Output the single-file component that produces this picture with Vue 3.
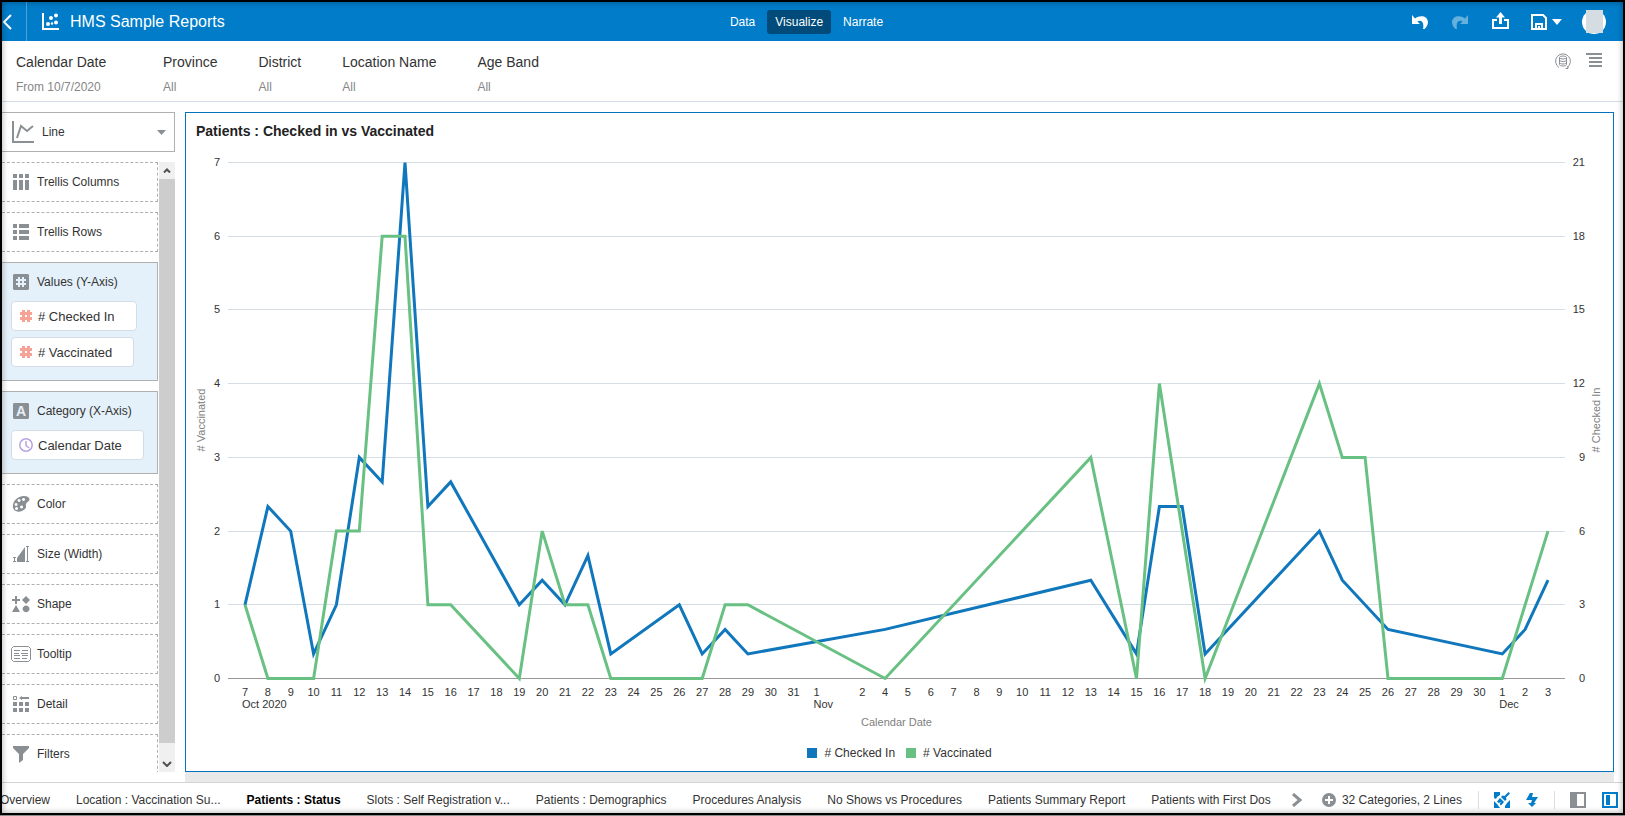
<template>
  <div class="frame">
    <!-- top bar -->
    <header class="topbar">
      <div class="brand">
        <button class="back" aria-label="Back">
          <svg width="10" height="16" viewBox="0 0 10 16"><path d="M9 1L2 8l7 7" fill="none" stroke="#fff" stroke-width="2" /></svg>
        </button>
        <svg class="logo" width="17" height="17" viewBox="0 0 17 17" fill="#fff">
          <path d="M0 0h2v15h15v2H0z" />
          <circle cx="9" cy="5" r="2" />
          <circle cx="14" cy="2.500" r="2" />
          <circle cx="6" cy="11" r="2" />
          <circle cx="14" cy="9.500" r="2" />
          <circle cx="10" cy="10.500" r="1.200" />
        </svg>
        <h1>HMS Sample Reports</h1>
      </div>
      <nav class="modes">
        <button v-for="m in modes" :key="m" :class="{ active: m === mode }" @click="mode = m">{{ m }}</button>
      </nav>
      <div class="actions">
        <button aria-label="Undo">
          <svg width="16" height="16" viewBox="0 0 16 16"><path d="M0 1v9h8L5.400 7.400C9 5.600 12.500 8 11 15h1.500c4-3.500 4.500-8.500 1.500-11.300C11 1.500 6.500 1.800 3 4.500z" fill="#fff" /></svg>
        </button>
        <button aria-label="Redo" disabled>
          <svg width="16" height="16" viewBox="0 0 16 16"><path d="M16 1v9H8l2.600-2.600C7 5.600 3.500 8 5 15H3.500C-.5 11.500-1 6.500 2 3.700 5 1.500 9.500 1.800 13 4.500z" fill="#66b0de" /></svg>
        </button>
        <button class="share" aria-label="Share">
          <svg width="17" height="18" viewBox="0 0 17 18"><path d="M8.500 0l4.500 5.500h-3V12H7V5.500H4zM0 7h5v2H2v6h13V9h-3V7h5v10H0z" fill="#fff" /></svg>
        </button>
        <button class="save" aria-label="Save">
          <svg width="16" height="16" viewBox="0 0 16 16" fill="none" stroke="#fff" stroke-width="2"><path d="M1 1h11l3 3v11H1z" /><path d="M5 15v-5h6v5" /><path d="M8 12v3" /></svg>
          <svg width="10" height="6" viewBox="0 0 10 6"><path d="M0 0h10L5 6z" fill="#fff" /></svg>
        </button>
        <button class="avatar" aria-label="Account"><span></span></button>
      </div>
    </header>

    <!-- filter bar -->
    <section class="filters">
      <button v-for="f in filters" :key="f.name" class="filter">
        <span class="filter-name">{{ f.name }}</span>
        <span class="filter-value">{{ f.value }}</span>
      </button>
      <div class="filter-tools">
        <button aria-label="Data refresh">
          <svg width="16" height="16" viewBox="0 0 16 16" fill="none" stroke="#8a8f94">
            <path d="M4 14.500A7.400 7.400 0 1 1 12 14.500" />
            <path d="M10.500 15.500h2.500v-2.500" />
            <ellipse cx="8" cy="4.500" rx="3.500" ry="1.500" />
            <path d="M4.500 4.500v7c0 2 7 2 7 0v-7M4.500 7c0 2 7 2 7 0M4.500 9.500c0 2 7 2 7 0" />
          </svg>
        </button>
        <button aria-label="Menu">
          <svg width="16" height="14" viewBox="0 0 16 14" fill="#8a8f94"><path d="M0 0h16v2H0zM3 4h13v2H3zM3 8h13v2H3zM3 12h13v2H3z" /></svg>
        </button>
      </div>
    </section>

    <div class="workspace">
      <!-- grammar panel -->
      <aside class="grammar">
        <div class="viz-type">
          <svg width="22" height="22" viewBox="0 0 22 22" fill="none" stroke="#8a8f94" stroke-width="2">
            <path d="M1 0v21h21" />
            <path d="M5 17L9 5l6 5 6-5" />
          </svg>
          <select v-model="vizType" aria-label="Visualization type">
            <option>Line</option>
            <option>Bar</option>
            <option>Area</option>
          </select>
          <svg width="9" height="5" viewBox="0 0 9 5"><path d="M0 0h9L4.500 5z" fill="#8a8f94" /></svg>
        </div>
        <div class="zones">
          <div class="zone-list">
            <div v-for="z in zones" :key="z.name" class="zone" :class="{ filled: z.chips }">
              <div class="zone-head">
                <svg width="20" height="18" viewBox="0 0 20 18">
                  <path v-if="z.fill" :d="z.fill" fill="#8a8f94" fill-rule="evenodd" />
                  <path v-if="z.line" :d="z.line" fill="none" :stroke="z.chips ? '#e4f0fa' : '#8a8f94'" :stroke-width="z.chips ? 2 : 1" />
                  <text v-if="z.letter" x="10" y="14" class="letter">{{ z.letter }}</text>
                </svg>
                <span>{{ z.name }}</span>
              </div>
              <div v-if="z.chips" class="chips">
                <button v-for="c in z.chips" :key="c" class="chip">
                  <svg v-if="z.kind === 'measure'" width="14" height="14" viewBox="0 0 14 14">
                    <path d="M4.500 1v12M9.500 1v12M1 4.500h12M1 9.500h12" stroke="#f4a396" stroke-width="3" />
                  </svg>
                  <svg v-else width="14" height="14" viewBox="0 0 14 14" fill="none" stroke="#b9a3df" stroke-width="1.500">
                    <circle cx="7" cy="7" r="6.200" />
                    <path d="M7 3v4.500l3 2.500" />
                  </svg>
                  {{ c }}
                </button>
              </div>
            </div>
          </div>
          <div class="scrollbar">
            <button class="up" aria-label="Scroll up">
              <svg width="8" height="5" viewBox="0 0 8 5"><path d="M1 4.500l3-3 3 3" fill="none" stroke="#505050" stroke-width="2" /></svg>
            </button>
            <div class="thumb"></div>
            <button class="down" aria-label="Scroll down">
              <svg width="10" height="6" viewBox="0 0 10 6"><path d="M1 1l4 4 4-4" fill="none" stroke="#505050" stroke-width="2" /></svg>
            </button>
          </div>
        </div>
      </aside>

      <!-- canvas -->
      <main class="canvas">
        <section class="viz">
          <h2>Patients : Checked in vs Vaccinated</h2>
          <div ref="plotBox" class="plot">
            <svg :width="width" :height="height">
              <g v-for="n in 8" :key="n">
                <line :x1="left" :x2="right" :y1="gridY(n - 1)" :y2="gridY(n - 1)" :class="n === 1 ? 'base' : 'grid'" />
                <text class="tick end" :x="left - 8" :y="gridY(n - 1) + 3">{{ n - 1 }}</text>
                <text class="tick end" :x="right + 20" :y="gridY(n - 1) + 3">{{ (n - 1) * 3 }}</text>
              </g>
              <text v-for="d in days" :key="d.slot" class="tick mid" :x="px(d.slot)" :y="bottom + 18">{{ d.label }}</text>
              <text v-for="m in months" :key="m.name" class="tick" :x="px(m.slot) - 3" :y="bottom + 30">{{ m.name }}</text>
              <polyline class="line checked" :points="points(checkedIn, 21)" />
              <polyline class="line vaccinated" :points="points(vaccinated, 7)" />
              <text class="axis mid" :x="(left + right) / 2" :y="bottom + 48">Calendar Date</text>
              <text class="axis mid" :transform="`translate(19 ${middle}) rotate(-90)`"># Vaccinated</text>
              <text class="axis mid" :transform="`translate(${width - 13} ${middle}) rotate(-90)`"># Checked In</text>
            </svg>
          </div>
          <ul class="legend">
            <li><i class="swatch checked"></i># Checked In</li>
            <li><i class="swatch vaccinated"></i># Vaccinated</li>
          </ul>
        </section>
      </main>
    </div>

    <!-- canvas tabs and status -->
    <footer class="bottombar">
      <nav class="tabs">
        <button v-for="t in tabs" :key="t" :class="{ active: t === tab }" @click="tab = t">{{ t }}</button>
      </nav>
      <button class="more" aria-label="Next canvases">
        <svg width="10" height="14" viewBox="0 0 10 14"><path d="M1 1l7 6-7 6" fill="none" stroke="#8a8f94" stroke-width="3" /></svg>
      </button>
      <button class="add" aria-label="Add canvas">
        <svg width="14" height="14" viewBox="0 0 14 14"><circle cx="7" cy="7" r="7" fill="#8a8f94" /><path d="M7 3v8M3 7h8" stroke="#fff" stroke-width="2" /></svg>
      </button>
      <span class="status">32 Categories, 2 Lines</span>
      <div class="toggles">
        <button aria-label="Brushing">
          <svg width="16" height="16" viewBox="0 0 16 16" fill="#007cc8">
            <path d="M0 0h6v3L3 5l-1 2-2-1zM16 8v8h-5v-2l2-3zM0 9l3 3 3 4H0z" />
            <path d="M14.500 0L16 1.500l-4 4 .5 2L11 9 7 5l1.500-1.500 2 .5zM6 6l4 4-3 3.500L5.500 12 7 10l-2.500 1L3 9.500z" />
          </svg>
        </button>
        <button aria-label="Auto apply">
          <svg width="12" height="14" viewBox="0 0 12 14"><path d="M4 0h3L6 4h6l-4 6h2l-4 4-4-4h3l1-3H0z" fill="#007cc8" /></svg>
        </button>
      </div>
      <div class="toggles panels">
        <button aria-label="Toggle data panel">
          <svg width="16" height="16" viewBox="0 0 16 16"><path d="M1 1h14v14H1z" fill="#fff" stroke="#8a8f94" stroke-width="2" /><path d="M1 1h6v14H1z" fill="#8a8f94" /></svg>
        </button>
        <button aria-label="Toggle grammar panel">
          <svg width="16" height="16" viewBox="0 0 16 16"><path d="M1 1h14v14H1z" fill="#fff" stroke="#007cc8" stroke-width="2" /><path d="M4 3h4v10H4z" fill="#007cc8" /></svg>
        </button>
      </div>
    </footer>
  </div>
</template>

<script setup>
import { ref, computed, onMounted, onUnmounted } from 'vue'

const modes = ['Data', 'Visualize', 'Narrate']
const mode = ref('Visualize')
const vizType = ref('Line')

const filters = [
  { name: 'Calendar Date', value: 'From 10/7/2020' },
  { name: 'Province', value: 'All' },
  { name: 'District', value: 'All' },
  { name: 'Location Name', value: 'All' },
  { name: 'Age Band', value: 'All' }
]

const zones = [
  { name: 'Trellis Columns', fill: 'M2 1h4v4H2zM8 1h4v4H8zM14 1h4v4h-4zM2 7h4v10H2zM8 7h4v10H8zM14 7h4v10h-4z' },
  { name: 'Trellis Rows', fill: 'M2 1h4v4H2zM8 1h10v4H8zM2 7h4v4H2zM8 7h10v4H8zM2 13h4v4H2zM8 13h10v4H8z' },
  {
    name: 'Values (Y-Axis)',
    kind: 'measure',
    fill: 'M3 1h14l1 1v14l-1 1H3l-1-1V2z',
    line: 'M8 4v10M12 4v10M5 7h10M5 11h10',
    chips: ['# Checked In', '# Vaccinated']
  },
  {
    name: 'Category (X-Axis)',
    kind: 'date',
    fill: 'M3 1h14l1 1v14l-1 1H3l-1-1V2z',
    letter: 'A',
    chips: ['Calendar Date']
  },
  {
    name: 'Color',
    fill: 'M13 1c3 0 5 1 5.500 3 .5 2-3 3-3.500 5s1 3-1 5c-3 3-9 4-11.500 0C0 9 5 1 13 1zM8 4a1.500 1.500 0 1 0 .1 0zM12.500 3a1.500 1.500 0 1 0 .1 0zM5 8a1.500 1.500 0 1 0 .1 0zM5.500 12a1.500 1.500 0 1 0 .1 0zM10.500 10.500a1.500 1.500 0 1 0 .1 0z'
  },
  { name: 'Size (Width)', fill: 'M6 17V13L14 2v15z', line: 'M2 12.500h3M2 16.500h3M3.500 12.500v4M15 1.500h3M15 16.500h3M16.500 1.500v15' },
  { name: 'Shape', fill: 'M4 1h2v3h3v2H6v3H4V6H1V4h3zM15 1l4 4-4 4-4-4zM5 10l4 7H1zM15 10.500a3.400 3.400 0 1 0 .1 0z' },
  { name: 'Tooltip', line: 'M2.500 1.500h15l2 2v11l-2 2h-15l-2-2v-11zM3 5.500h6M11 5.500h6M3 8.500h5M10 8.500h7M3 10.500h6M11 10.500h6M3 13.500h6M11 13.500h5' },
  { name: 'Detail', fill: 'M2 7h4v4H2zM8 7h4v4H8zM14 7h4v4h-4zM2 13h4v4H2zM8 13h4v4H8zM14 13h4v4h-4zM8 3l3-2v1h7v2h-7v1z', line: 'M2.500 1.500h3v3h-3z' },
  { name: 'Filters', fill: 'M2 1h16v2l-6 6v6l-4 3V9L2 3z' }
]

const tabs = [
  'Overview',
  'Location : Vaccination Su...',
  'Patients : Status',
  'Slots : Self Registration v...',
  'Patients : Demographics',
  'Procedures Analysis',
  'No Shows vs Procedures',
  'Patients Summary Report',
  'Patients with First Dos'
]
const tab = ref('Patients : Status')

// Day labels, one slot per day along the axis
const days = []
for (let d = 7; d <= 31; d++) days.push({ slot: d - 7, label: d })
days.push({ slot: 25, label: 1 }, { slot: 27, label: 2 })
for (let d = 4; d <= 30; d++) days.push({ slot: d + 24, label: d })
for (let d = 1; d <= 3; d++) days.push({ slot: d + 54, label: d })

const months = [
  { slot: 0, name: 'Oct 2020' },
  { slot: 25, name: 'Nov' },
  { slot: 55, name: 'Dec' }
]

// [slot, value]
const checkedIn = [
  [0, 3], [1, 7], [2, 6], [3, 1], [4, 3], [5, 9], [6, 8], [7, 21], [8, 7], [9, 8],
  [12, 3], [13, 4], [14, 3], [15, 5], [16, 1], [19, 3], [20, 1], [21, 2], [22, 1],
  [28, 2], [37, 4], [39, 1], [40, 7], [41, 7], [42, 1], [47, 6], [48, 4], [50, 2],
  [55, 1], [56, 2], [57, 4]
]
const vaccinated = [
  [0, 1], [1, 0], [3, 0], [4, 2], [5, 2], [6, 6], [7, 6], [8, 1], [9, 1], [12, 0],
  [13, 2], [14, 1], [15, 1], [16, 0], [20, 0], [21, 1], [22, 1], [28, 0], [37, 3],
  [39, 0], [40, 4], [42, 0], [47, 4], [48, 3], [49, 3], [50, 0], [55, 0], [57, 2]
]

// Plot size follows its box
const plotBox = ref(null)
const width = ref(1427)
const height = ref(587)
const left = 42
const top = 15
const right = computed(() => width.value - 48)
const bottom = computed(() => height.value - 57)
const middle = computed(() => (top + bottom.value) / 2)

const px = (slot) => left + 17 + (slot * (right.value - left - 34)) / 57
const py = (value, max) => bottom.value - (value / max) * (bottom.value - top)
const gridY = (n) => Math.round(py(n, 7)) + 0.5
const points = (series, max) =>
  series.map(([slot, value]) => `${px(slot).toFixed(1)},${(py(value, max) + 0.5).toFixed(1)}`).join(' ')

const measure = () => {
  if (!plotBox.value) return
  width.value = plotBox.value.clientWidth
  height.value = plotBox.value.clientHeight
}

onMounted(() => {
  measure()
  window.addEventListener('resize', measure)
})

onUnmounted(() => {
  window.removeEventListener('resize', measure)
})
</script>

<style>
body {
  background: #8c8c8c;
}
</style>

<style scoped>
.frame {
  position: relative;
  box-sizing: border-box;
  display: flex;
  flex-direction: column;
  height: calc(100vh - 1px);
  overflow: hidden;
  border: 2px solid #000;
  background: #fff;
  color: #333;
  font-family: 'Liberation Sans', Arial, sans-serif;
  font-size: 12px;
}

/* soft inner edge over everything */
.frame::after {
  content: '';
  position: absolute;
  inset: 0;
  box-shadow: inset 0 0 6px rgba(0, 0, 0, 0.35);
  pointer-events: none;
}

button {
  display: flex;
  align-items: center;
  margin: 0;
  padding: 0;
  border: none;
  background: none;
  color: inherit;
  font: inherit;
  white-space: nowrap;
  cursor: pointer;
}

svg {
  display: block;
  flex: none;
}

h1,
h2,
ul {
  margin: 0;
  padding: 0;
}

/* top bar */
.topbar {
  display: grid;
  grid-template-columns: 1fr auto 1fr;
  align-items: center;
  flex: none;
  height: 38px;
  padding: 0 12px 1px 0;
  background: #007cc8;
  color: #fff;
}

.brand {
  display: flex;
  align-items: center;
  height: 100%;
}

.back {
  width: 25px;
  height: 39px;
  box-sizing: border-box;
  border-right: 1px solid #4ba3d9;
}

.logo {
  margin: 0 11px 0 15px;
}

h1 {
  font-size: 16px;
  font-weight: 400;
}

.modes {
  display: flex;
  gap: 4px;
}

.modes button {
  height: 24px;
  padding: 0 8px;
  border-radius: 3px;
}

.modes .active {
  background: #004b7a;
}

.actions {
  display: flex;
  align-items: center;
  justify-content: flex-end;
  gap: 24px;
  padding-right: 5px;
}

.share {
  margin-right: -2px;
  padding-bottom: 2px;
}

.save {
  gap: 5px;
  margin-right: -4px;
}

.avatar {
  justify-content: center;
  width: 24px;
  height: 24px;
  border-radius: 50%;
  background: #fff;
}

.avatar span {
  width: 17px;
  height: 23px;
  background: #d5dde3;
}

/* filter bar */
.filters {
  display: flex;
  gap: 41px;
  flex: none;
  padding: 12px 21px 7px 14px;
  border-bottom: 1px solid #d3dde8;
}

.filter {
  flex-direction: column;
  align-items: flex-start;
  gap: 9px;
}

.filter:first-child {
  min-width: 106px;
}

.filter-name {
  font-size: 14px;
  line-height: 18px;
}

.filter-value {
  color: #868686;
  line-height: 14px;
}

.filter-tools {
  display: flex;
  align-items: flex-start;
  gap: 15px;
  margin-left: auto;
}

/* workspace */
.workspace {
  display: flex;
  flex: 1;
  min-height: 0;
}

.grammar {
  display: flex;
  flex-direction: column;
  gap: 10px;
  flex: none;
  width: 173px;
  padding: 10px 10px 10px 0;
}

.viz-type {
  display: flex;
  align-items: center;
  gap: 8px;
  box-sizing: border-box;
  height: 40px;
  padding: 0 8px 0 10px;
  border: 1px solid #b0b0b0;
  border-left: none;
}

.viz-type select {
  flex: 1;
  min-width: 0;
  height: 24px;
  padding: 0;
  border: none;
  background: none;
  appearance: none;
  color: #333;
  font: inherit;
}

.zones {
  display: flex;
  justify-content: space-between;
  flex: 1;
  min-height: 0;
}

.zone-list {
  display: flex;
  flex-direction: column;
  gap: 10px;
  width: 156px;
  overflow: hidden;
}

.zone {
  box-sizing: border-box;
  flex: none;
  border: 1px dashed #b0b0b0;
  border-left: none;
}

.zone.filled {
  padding-bottom: 13px;
  border: 1px solid #b0b0b0;
  border-left: none;
  background: #e4f0fa;
}

.zone-head {
  display: flex;
  align-items: center;
  gap: 6px;
  height: 38px;
  padding-left: 9px;
}

.letter {
  fill: #e4f0fa;
  font-size: 14px;
  font-weight: 700;
  text-anchor: middle;
}

.chips {
  display: flex;
  flex-direction: column;
  align-items: flex-start;
  gap: 6px;
  padding-left: 9px;
}

.chip {
  box-sizing: border-box;
  gap: 5px;
  height: 30px;
  padding: 0 21px 0 7px;
  border: 1px solid #d3dde8;
  border-radius: 4px;
  background: #fff;
  font-size: 13px;
}

.scrollbar {
  display: flex;
  flex-direction: column;
  width: 16px;
  background: #f0f0f0;
}

.scrollbar button {
  justify-content: center;
  height: 17px;
}

.scrollbar .down {
  margin-top: 12px;
}

.thumb {
  flex: 1;
  background: #cdcdcd;
}

/* canvas */
.canvas {
  display: flex;
  flex: 1;
  min-width: 0;
  margin-right: 9px;
  padding-bottom: 10px;
  background: linear-gradient(#fff 10px, #e9e9e9 10px);
}

.viz {
  display: flex;
  flex-direction: column;
  flex: 1;
  min-width: 0;
  margin-top: 10px;
  border: 1px solid #0572bd;
  background: #fff;
}

h2 {
  flex: none;
  padding: 10px 10px 8px;
  font-size: 14px;
  line-height: 16px;
  color: #222;
}

.plot {
  flex: 1;
  min-height: 0;
  overflow: hidden;
}

.grid {
  stroke: #d6dde4;
}

.base {
  stroke: #999;
}

.tick {
  fill: #333;
  font-size: 11px;
}

.axis {
  fill: #808080;
  font-size: 11px;
}

.mid {
  text-anchor: middle;
}

.end {
  text-anchor: end;
}

.line {
  fill: none;
  stroke-width: 3;
}

.line.checked {
  stroke: #1077bd;
}

.line.vaccinated {
  stroke: #68c182;
}

.legend {
  display: flex;
  justify-content: center;
  align-items: center;
  gap: 11px;
  flex: none;
  height: 36px;
  list-style: none;
}

.legend li {
  display: flex;
  align-items: center;
  gap: 7px;
}

.swatch {
  width: 10px;
  height: 10px;
}

.swatch.checked {
  background: #1077bd;
}

.swatch.vaccinated {
  background: #68c182;
}

/* bottom bar */
.bottombar {
  display: flex;
  align-items: center;
  flex: none;
  height: 26px;
  padding: 4px 5px 0 0;
  border-top: 1px solid #d3d3d3;
}

.tabs {
  display: flex;
  gap: 26px;
  flex: 1;
  min-width: 0;
  margin-left: -2px;
  overflow: hidden;
}

.tabs .active {
  color: #000;
  font-weight: 700;
}

.add {
  margin: 0 6px 0 20px;
}

.status {
  white-space: nowrap;
}

.toggles {
  display: flex;
  align-items: center;
  gap: 16px;
  height: 18px;
  margin-left: 16px;
  padding-left: 15px;
  border-left: 1px solid #dcdfe2;
}
</style>
